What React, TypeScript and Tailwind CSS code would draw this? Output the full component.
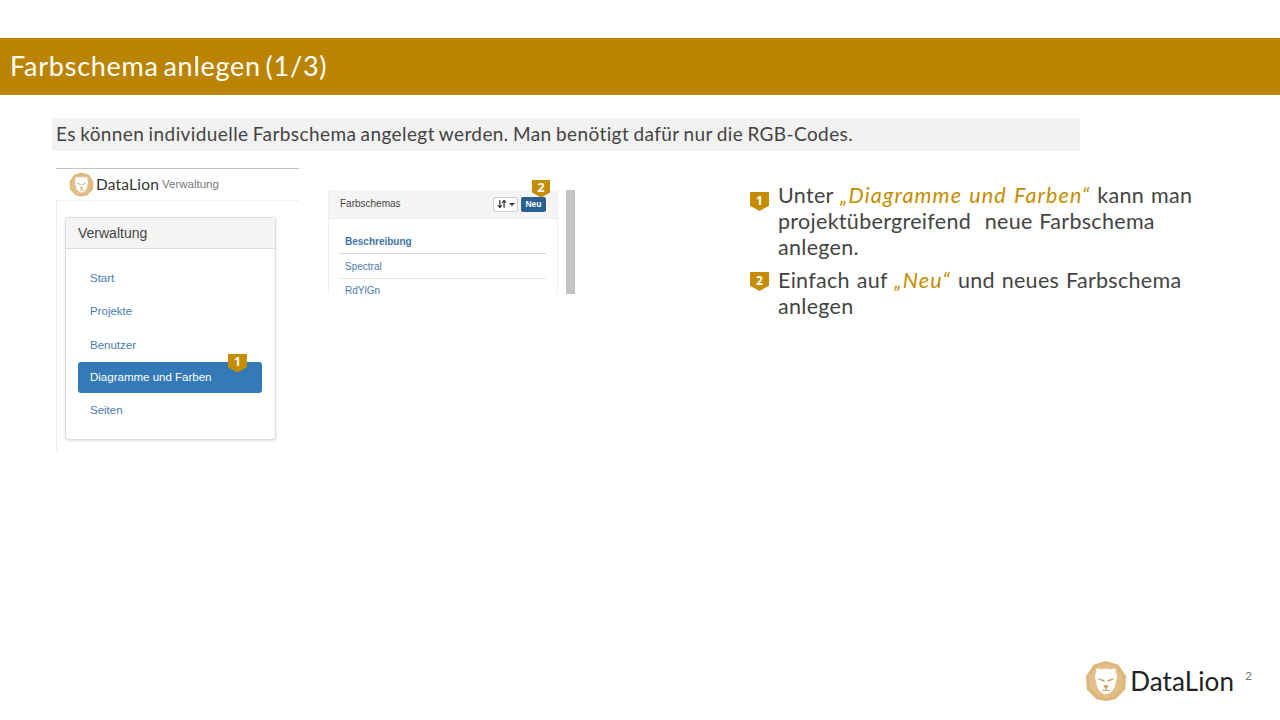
import { ArrowDownUp } from 'lucide-react';

const Lion = ({ size }: { size: number }) => (
  <svg width={size} height={size} viewBox="0 0 44 44">
    <path d="M22 1 L35 5 L43 17 L42 31 L32 41 L22 43 L12 41 L2 31 L1 17 L9 5 Z" fill="#dcb67a" />
    <path d="M22 4 L33 8 L40 18 L39 30 L31 38 L22 40 L13 38 L5 30 L4 18 L11 8 Z" fill="#e2bf88" />
    <path d="M12 12 C10 9 14 8 16 10 C19 9 25 9 28 10 C30 8 34 9 32 12 C34 16 34 20 32 24 C32 29 28 35 22 36 C16 35 12 29 12 24 C10 20 10 16 12 12 Z" fill="#fff" />
    <path d="M15 20 L20 22 M29 20 L24 22" stroke="#c99f60" strokeWidth="1.6" strokeLinecap="round" />
    <path d="M20 27 L24 27 L22 30 Z M22 30 L22 32 M18 32 L22 32 L26 32" stroke="#c99f60" strokeWidth="1.2" fill="#c99f60" strokeLinejoin="round" />
  </svg>
);

const Marker = ({ n, className }: { n: number; className: string }) => (
  <div
    className={`flex items-start justify-center bg-[#c48d00] text-white font-bold font-['Open_Sans',sans-serif] [clip-path:polygon(0_0,100%_0,100%_72%,50%_100%,0_72%)] ${className}`}
  >
    {n}
  </div>
);

const navItems = ['Start', 'Projekte', 'Benutzer', 'Diagramme und Farben', 'Seiten'];

const AdminShot = () => (
  <div className="w-[243px] h-[284px] ml-[4px] border-t border-[#c4c4c4] font-['Liberation_Sans',sans-serif]">
    <div className="h-[32px] flex items-center pl-[13px] border-b border-[#f0f0f0]">
      <Lion size={25} />
      <span className="ml-[2px] text-[15.5px] text-[#333] font-['Lato',sans-serif] tracking-[0.2px]">DataLion</span>
      <span className="ml-[3px] text-[11.5px] text-[#777]">Verwaltung</span>
    </div>
    <div className="border-l border-[#eeeeee] h-[250px] pl-[8px] pt-[16px]">
      <div className="w-[211px] h-[223px] border border-[#dddddd] rounded-[3px] shadow-sm bg-white">
        <div className="h-[31px] bg-[#f5f5f5] border-b border-[#dddddd] flex items-center px-[12px] text-[14px] text-[#444]">
          Verwaltung
        </div>
        <ul className="pl-[12px] pr-[13px] pt-[13px] flex flex-col gap-[1px]">
          {navItems.map((item) =>
            item === 'Diagramme und Farben' ? (
              <li
                key={item}
                className="relative h-[31px] -mt-[1px] mb-[1px] pt-[2px] bg-[#337ab7] rounded-[3px] flex items-center px-[12px] text-[11.5px] text-white"
              >
                {item}
                <Marker n={1} className="absolute right-[15px] top-[-8px] w-[19px] h-[19px] text-[12px] leading-[16px]" />
              </li>
            ) : (
              <li key={item} className="h-[32.5px] flex items-center px-[12px] text-[11.5px] text-[#4a7bab]">
                {item}
              </li>
            ),
          )}
        </ul>
      </div>
    </div>
  </div>
);

const SchemeShot = () => (
  <div className="ml-[29px] w-[248px] h-[115px] mt-[11px] pt-[11px] flex font-['Liberation_Sans',sans-serif]">
    <div className="w-[230px] border-r border-l border-[#eeeeee]">
      <div className="h-[29px] bg-[#f5f5f5] border-b border-[#eeeeee] flex items-center pl-[11px] pr-[11px] pb-[2px] text-[10px] text-[#444]">
        <span>Farbschemas</span>
        <div className="ml-auto mt-[2px] flex items-center gap-[3px]">
          <div className="w-[25px] h-[15px] bg-white border border-[#cccccc] rounded-[2px] flex items-center justify-center gap-[2px] text-[#333]">
            <ArrowDownUp size={10} strokeWidth={3} />
            <span className="w-0 h-0 border-x-[3px] border-x-transparent border-t-[3px] border-t-[#333]" />
          </div>
          <div className="relative w-[25px] h-[15px] bg-[#286090] rounded-[2px] flex items-center justify-center text-[8.5px] font-bold text-white">
            Neu
            <Marker n={2} className="absolute left-[11px] top-[-17px] w-[18px] h-[18px] text-[13px] leading-[14px]" />
          </div>
        </div>
      </div>
      <div className="px-[11px] h-[75px] overflow-hidden text-[10px] text-[#4a7bab]">
        <div className="h-[35px] pt-[11px] flex items-center px-[5px] border-b border-[#d6d6d6] font-bold text-[10px] text-[#3f74a8]">Beschreibung</div>
        <div className="h-[25px] flex items-center px-[5px] border-b border-[#e8e8e8]">Spectral</div>
        <div className="h-[23px] flex items-center px-[5px]">RdYlGn</div>
      </div>
    </div>
    <div className="ml-[8px] w-[9px] h-[104px] bg-[#c4c4c4]" />
  </div>
);

const BulletRow = ({ n, markerTop, children }: { n: number; markerTop: string; children: React.ReactNode }) => (
  <div className="flex">
    <Marker n={n} className={`w-[19px] h-[19px] mr-[9px] shrink-0 text-[12px] leading-[17px] ${markerTop}`} />
    <p className="text-[21.5px] leading-[26px] text-[#444] tracking-[0.3px] [word-spacing:1px]">{children}</p>
  </div>
);

const Gold = ({ children }: { children: React.ReactNode }) => (
  <span className="italic text-[#c48d00] tracking-[1.15px]">{children}</span>
);

export default function App() {
  return (
    <div className="w-[1280px] h-[720px] bg-white flex flex-col overflow-hidden font-['Lato',sans-serif]">
      <div className="mt-[38px] h-[57px] bg-[#bb8400] flex items-center pl-[10px] text-[27px] text-white tracking-[0.75px] [word-spacing:-3px]">
        Farbschema anlegen (1/3)
      </div>

      <div className="ml-[52px] mt-[23px] w-[1028px] h-[33px] bg-[#f2f2f2] flex items-center pl-[4px] pb-[1px] text-[19px] text-[#444] tracking-[0.41px] [word-spacing:-1px]">
        Es können individuelle Farbschema angelegt werden. Man benötigt dafür nur die RGB-Codes.
      </div>

      <div className="flex ml-[52px] mt-[17px]">
        <AdminShot />
        <SchemeShot />
        <div className="ml-[174px] mt-[14px] w-[452px] flex flex-col gap-[7px]">
          <BulletRow n={1} markerTop="mt-[10px]">
            Unter <Gold>„Diagramme und Farben“</Gold> kann man projektübergreifend&nbsp; neue Farbschema anlegen.
          </BulletRow>
          <BulletRow n={2} markerTop="mt-[5px]">
            Einfach auf <Gold>„Neu“</Gold> und neues Farbschema anlegen
          </BulletRow>
        </div>
      </div>

      <div className="mt-auto mb-[18px] mr-[28px] flex justify-end items-center">
        <Lion size={42} />
        <span className="ml-[3px] text-[26px] text-[#222] tracking-[0.1px]">DataLion</span>
        <span className="ml-[11px] mb-[10px] text-[12px] text-[#777]">2</span>
      </div>
    </div>
  );
}
